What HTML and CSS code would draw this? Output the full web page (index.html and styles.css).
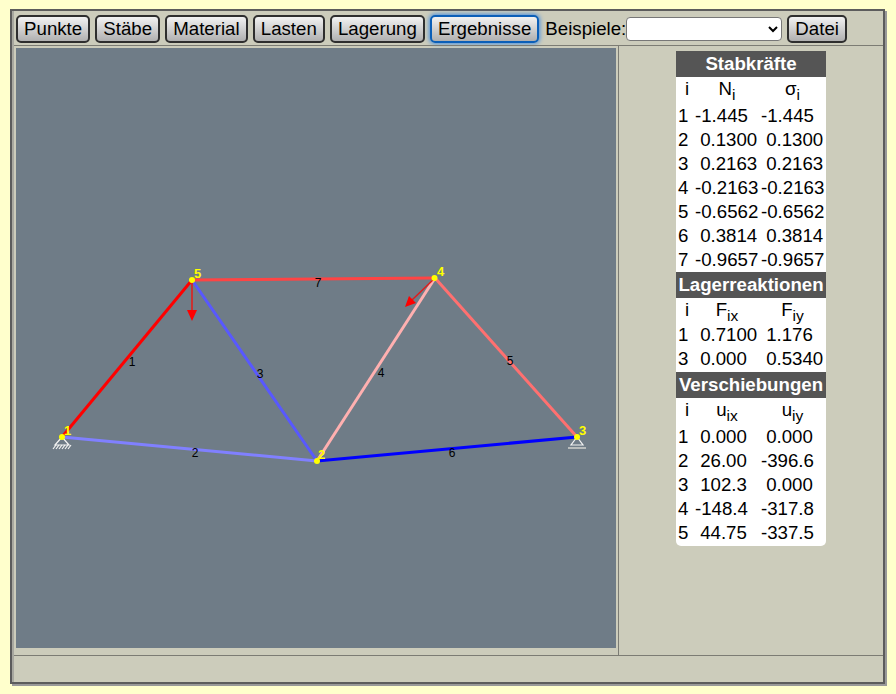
FILE: index.html
```html
<!DOCTYPE html>
<html lang="de">
<head>
  <meta charset="UTF-8" />
  <title>Fachwerk</title>
  <link rel="stylesheet" href="styles.css">
</head>
<body>
  <div class="frame">
    <div class="toolbar">
      <button>Punkte</button>
      <button>Stäbe</button>
      <button>Material</button>
      <button>Lasten</button>
      <button>Lagerung</button>
      <button class="active">Ergebnisse</button>
      <label class="examples">Beispiele:<select></select></label>
      <button>Datei</button>
    </div>
    <div class="main">
      <div class="left">
        <svg class="canvas" width="600" height="600" viewBox="16 48 600 600">
          <!-- staebe -->
          <g fill="none">
            <line class="bar" x1="62" y1="437" x2="192" y2="280" stroke="#ff0000"/>
            <line class="bar" x1="62" y1="437" x2="317" y2="461" stroke="#8080ff"/>
            <line class="bar" x1="192" y1="280" x2="317" y2="461" stroke="#5858ff"/>
            <line class="bar" x1="317" y1="461" x2="435" y2="278" stroke="#ffb0b0"/>
            <line class="bar" x1="435" y1="278" x2="577" y2="437" stroke="#ff7070"/>
            <line class="bar" x1="317" y1="461" x2="577" y2="437" stroke="#0000ff"/>
            <line class="bar" x1="192" y1="280" x2="435" y2="278" stroke="#ff4444"/>
          </g>
          <!-- lager -->
          <g class="support">
            <path d="M62 437 L55 445 H69 Z"/>
            <path d="M53 449 L56 445 M56 449 L59 445 M59 449 L62 445 M62 449 L65 445 M65 449 L68 445 M68 449 L71 445"/>
            <path d="M577 437 L571 445 H583 Z"/>
          </g>
          <rect x="568" y="447" width="18" height="2" fill="#b8bcbc"/>
          <!-- lasten -->
          <line class="load" x1="192" y1="280" x2="192" y2="312"/>
          <path d="M187 310 H197 L192 321 Z" fill="#ff0000"/>
          <line class="load thin" x1="435" y1="278" x2="412" y2="300"/>
          <path d="M405 307 L409 296 L416 303 Z" fill="#ff0000"/>
          <!-- knoten -->
          <g fill="#ffff00">
            <circle cx="62" cy="437" r="3"/>
            <circle cx="317" cy="461" r="3"/>
            <circle cx="577" cy="437" r="3"/>
            <circle cx="434.500" cy="278" r="3"/>
            <circle cx="192" cy="280" r="3"/>
          </g>
          <g class="node-labels">
            <text x="64" y="435">1</text>
            <text x="318" y="459">2</text>
            <text x="579" y="435">3</text>
            <text x="437" y="276">4</text>
            <text x="194" y="278">5</text>
          </g>
          <g class="bar-labels">
            <text x="132" y="366">1</text>
            <text x="195" y="457">2</text>
            <text x="260" y="378">3</text>
            <text x="381" y="377">4</text>
            <text x="510" y="365">5</text>
            <text x="452" y="457">6</text>
            <text x="318" y="287">7</text>
          </g>
        </svg>
      </div>
      <div class="right">
        <table class="results">
          <colgroup><col class="c-i"><col class="c-a"><col class="c-b"></colgroup>
          <tr><th colspan="3">Stabkräfte</th></tr>
          <tr class="head tall"><td>i</td><td>N<sub>i</sub></td><td>σ<sub>i</sub></td></tr>
          <tr><td>1</td><td>-1.445</td><td>-1.445</td></tr>
          <tr><td>2</td><td>&nbsp;0.1300</td><td>&nbsp;0.1300</td></tr>
          <tr><td>3</td><td>&nbsp;0.2163</td><td>&nbsp;0.2163</td></tr>
          <tr><td>4</td><td>-0.2163</td><td>-0.2163</td></tr>
          <tr><td>5</td><td>-0.6562</td><td>-0.6562</td></tr>
          <tr><td>6</td><td>&nbsp;0.3814</td><td>&nbsp;0.3814</td></tr>
          <tr><td>7</td><td>-0.9657</td><td>-0.9657</td></tr>
          <tr><th colspan="3">Lagerreaktionen</th></tr>
          <tr class="head short"><td>i</td><td>F<sub>ix</sub></td><td>F<sub>iy</sub></td></tr>
          <tr><td>1</td><td>&nbsp;0.7100</td><td>&nbsp;1.176</td></tr>
          <tr class="last"><td>3</td><td>&nbsp;0.000</td><td>&nbsp;0.5340</td></tr>
          <tr><th colspan="3">Verschiebungen</th></tr>
          <tr class="head tall"><td>i</td><td>u<sub>ix</sub></td><td>u<sub>iy</sub></td></tr>
          <tr><td>1</td><td>&nbsp;0.000</td><td>&nbsp;0.000</td></tr>
          <tr><td>2</td><td>&nbsp;26.00</td><td>-396.6</td></tr>
          <tr><td>3</td><td>&nbsp;102.3</td><td>&nbsp;0.000</td></tr>
          <tr><td>4</td><td>-148.4</td><td>-317.8</td></tr>
          <tr class="last"><td>5</td><td>&nbsp;44.75</td><td>-337.5</td></tr>
        </table>
      </div>
    </div>
    <div class="status"></div>
  </div>
</body>
</html>
```

FILE: styles.css
```css
html, body {
  margin: 0;
  padding: 0;
}

body {
  background: #ffffcc;
  font-family: "Liberation Sans", Arial, sans-serif;
  font-size: 18.67px;
  color: #000;
  padding: 9px 0 0 10px;
  height: 685px;
  overflow: hidden;
}

.frame {
  box-sizing: border-box;
  width: 875px;
  height: 675px;
  background: #ccccbb;
  border: 2px solid #5c5c5c;
  box-shadow: 2px 2px 0 #999, inset 2px 0 0 #a8a8a0;
  padding-left: 2px;
  display: flex;
  flex-direction: column;
}

.toolbar {
  height: 34px;
  box-sizing: border-box;
  padding: 4px 0 0 2px;
  display: flex;
  gap: 5px;
  align-items: flex-start;
}

button {
  font: inherit;
  height: 28px;
  padding: 0 6.08px;
  border: 2px solid #2e2e2e;
  border-radius: 5px;
  background: linear-gradient(#f2f2f2, #b0b0b0);
  color: #000;
}

button.active {
  border-color: #0b5fb8;
  box-shadow: 0 0 4px 1px #4a90e0;
}

.examples {
  display: flex;
  align-items: center;
  height: 28px;
  margin-left: 1px;
}

select {
  width: 156px;
  height: 24px;
  font: inherit;
  font-size: 14px;
  background: #fff;
  border: 1px solid #777;
  border-radius: 4px;
}

.main {
  flex: 1;
  display: flex;
  border-top: 1px solid #7c7c74;
  border-bottom: 1px solid #7c7c74;
}

.left {
  box-sizing: border-box;
  width: 605px;
  padding: 2px;
  border-right: 1px solid #7c7c74;
}

.canvas {
  display: block;
  background: #6f7c87;
}

.bar {
  stroke-width: 3;
}

.support {
  fill: none;
  stroke: #f4f4f4;
  stroke-width: 1.2;
}

.load {
  stroke: #c83232;
  stroke-width: 2;
}

.load.thin {
  stroke: #e01c1c;
  stroke-width: 1.5;
}

.node-labels text {
  fill: #ffff00;
  font: bold 13px "Liberation Sans", sans-serif;
}

.bar-labels text {
  fill: #000;
  font: 12px "Liberation Sans", sans-serif;
  text-anchor: middle;
}

.right {
  flex: 1;
  padding: 5px 0 0 57px;
}

.results {
  width: 150px;
  table-layout: fixed;
  border-collapse: separate;
  border-spacing: 0;
  background: #fff;
  border-radius: 0 0 5px 5px;
}

.c-i { width: 19px; }
.c-a { width: 66px; }
.c-b { width: 65px; }

.results td {
  height: 24px;
  padding: 0;
  line-height: 24px;
  vertical-align: top;
  white-space: nowrap;
}

.results td:first-child {
  padding-left: 2px;
}

.results tr.last td {
  height: 25px;
}

.results th {
  height: 26px;
  padding: 0 0 1px;
  box-sizing: border-box;
  line-height: 25px;
  background: #555;
  color: #fff;
  white-space: nowrap;
}

.results .head td {
  line-height: 24px;
  padding-right: 2px;
  text-align: center;
}

.results .head td:first-child {
  padding: 0 0 0 3px;
}

.results .tall td {
  height: 27px;
}

.results .short td {
  height: 25px;
}

.results sub {
  line-height: 0;
}

.status {
  height: 26px;
}
```
